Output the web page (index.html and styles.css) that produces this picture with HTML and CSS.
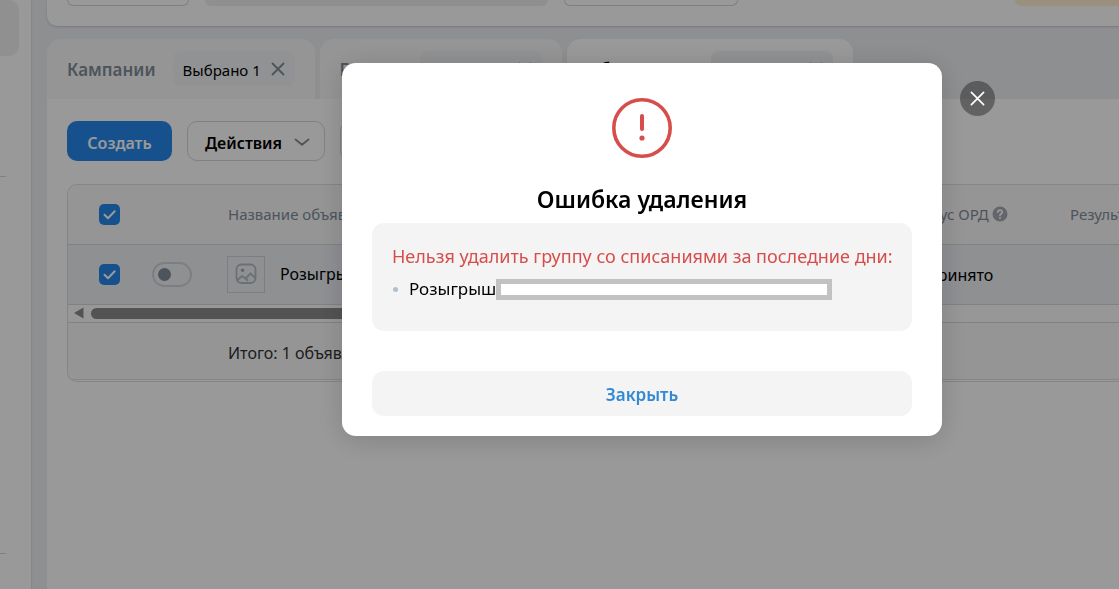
FILE: index.html
```html
<!DOCTYPE html>
<html lang="ru">
<head>
<meta charset="utf-8">
<title>Ошибка удаления</title>
<link rel="stylesheet" href="styles.css">
</head>
<body>
<div class="app">
  <aside class="sidebar">
    <div class="sidebar-item"></div>
    <hr class="sidebar-line">
    <hr class="sidebar-line sidebar-line-low">
  </aside>
  <main class="main">
    <section class="toolbar">
      <div class="tool tool-small"></div>
      <div class="tool tool-search"></div>
      <div class="tool tool-filter"></div>
      <div class="tool tool-notice"></div>
    </section>
    <nav class="tabs">
      <div class="tab">
        <a class="tab-link" href="#campaigns">Кампании</a>
        <button class="chip" type="button">Выбрано 1
          <svg class="chip-x" viewBox="0 0 14 14"><path d="M1.5 1.5l11 11M12.500 1.500l-11 11"/></svg>
        </button>
      </div>
      <div class="tab">
        <a class="tab-link" href="#groups">Группы</a>
        <button class="chip" type="button">Выбрано 1
          <svg class="chip-x" viewBox="0 0 14 14"><path d="M1.5 1.5l11 11M12.500 1.500l-11 11"/></svg>
        </button>
      </div>
      <div class="tab tab-active">
        <a class="tab-link" href="#ads">Объявления</a>
        <button class="chip" type="button">Выбрано 1
          <svg class="chip-x" viewBox="0 0 14 14"><path d="M1.5 1.5l11 11M12.500 1.500l-11 11"/></svg>
        </button>
      </div>
    </nav>
    <section class="panel">
      <div class="actions">
        <button class="btn btn-primary" type="button">Создать</button>
        <button class="btn btn-outline" type="button">Действия
          <svg class="chevron" viewBox="0 0 16 9"><path d="M1.500 1.500L8 6.800l6.500-5.300"/></svg>
        </button>
        <button class="btn btn-outline btn-more" type="button" aria-label="Ещё"></button>
      </div>
      <div class="grid">
        <table class="table">
          <colgroup><col class="col-check"><col class="col-toggle"><col class="col-name"><col class="col-status"><col class="col-result"></colgroup>
          <thead>
            <tr>
              <th class="cell-check"><input class="check" type="checkbox" aria-label="Выбрать все" checked></th>
              <th></th>
              <th>Название объявления</th>
              <th><span class="status-head">Статус ОРД
                <svg class="help" viewBox="0 0 16 16"><circle cx="8" cy="8" r="7.500"/><path d="M5.800 6.200C5.900 3.500 10.300 3.400 10.300 6.100C10.300 7.700 8 7.800 8 9.500"/><circle class="help-dot" cx="8" cy="12" r="1"/></svg></span></th>
              <th>Результат</th>
            </tr>
          </thead>
          <tbody>
            <tr>
              <td class="cell-check"><input class="check" type="checkbox" aria-label="Выбрать объявление" checked></td>
              <td class="cell-toggle"><input class="toggle" type="checkbox" role="switch" aria-label="Включить объявление"></td>
              <td><div class="ad">
                <span class="thumb"><svg class="picture" viewBox="0 0 22 22"><rect x="1.500" y="1.500" width="19" height="18.500" rx="5"/><circle class="picture-dot" cx="7.500" cy="7.200" r="1.700"/><path d="M2.500 17l4.500-4 3.500 2.500 5-5 4.500 4.300M11 16l1.500 1.200"/></svg></span>
                Розыгрыш</div></td>
              <td class="cell-status">Принято</td>
              <td></td>
            </tr>
          </tbody>
        </table>
        <div class="scroll">
          <svg class="scroll-arrow" viewBox="0 0 10 12"><path d="M9.500.5v11L.8 6.600a.8.8 0 0 1 0-1.200z"/></svg>
          <div class="scroll-thumb"></div>
        </div>
        <div class="total">Итого: 1 объявление</div>
      </div>
    </section>
  </main>
</div>
<div class="overlay">
  <div class="dialog" role="dialog" aria-modal="true" aria-labelledby="dialog-title">
    <button class="dialog-x" type="button" aria-label="Закрыть окно">
      <svg class="dialog-x-icon" viewBox="0 0 16 16"><path d="M1.500 1.500l13 13M14.500 1.500l-13 13"/></svg>
    </button>
    <svg class="alert" viewBox="0 0 60 60"><circle class="alert-ring" cx="30" cy="30" r="28.200"/><path d="M30 18v13"/><circle class="alert-dot" cx="30" cy="40" r="2.600"/></svg>
    <h1 class="dialog-title" id="dialog-title">Ошибка удаления</h1>
    <div class="message">
      <p class="message-text">Нельзя удалить группу со списаниями за последние дни:</p>
      <ul class="message-list">
        <li class="message-item">Розыгрыш <span class="redacted"></span></li>
      </ul>
    </div>
    <button class="dialog-button" type="button">Закрыть</button>
  </div>
</div>
</body>
</html>
```
FILE: styles.css
```css
* { box-sizing: border-box; }
body {
  margin: 0;
  height: 100vh;
  overflow: hidden;
  background: #ebeef2;
  color: #000;
  font-family: "Noto Sans", "Open Sans", sans-serif;
  font-size: 16px;
}
button { font: inherit; border: 0; margin: 0; cursor: pointer; }
svg { fill: none; stroke-linecap: round; stroke-linejoin: round; flex: none; }

.app { display: flex; gap: 16px; height: 100%; }
.sidebar { width: 31px; flex: none; background: #fff; box-shadow: 0 0 2px rgba(0, 0, 0, .15); }
.sidebar-item { height: 56px; width: 19px; background: #f0f0f1; border-radius: 0 10px 10px 0; }
.sidebar-line { width: 6px; height: 1px; margin: 120px 0 0; border: 0; background: #d3d6d9; }
.sidebar-line-low { margin-top: 376px; }
.main { flex: 1; min-width: 0; display: flex; flex-direction: column; }

.toolbar {
  display: flex;
  align-items: flex-start;
  height: 26px;
  flex: none;
  overflow: hidden;
  padding: 0 0 0 20px;
  background: #fff;
  border-bottom-left-radius: 10px;
  box-shadow: 0 1px 2px rgba(0, 0, 0, .15);
}
.tool { height: 6px; border-radius: 0 0 10px 10px; }
.tool-small, .tool-filter { border: 1px solid #d3d6d9; border-top: 0; }
.tool-small { width: 122px; }
.tool-search { width: 343px; margin-left: 16px; background: #ebeef2; }
.tool-filter { width: 174px; margin-left: 16px; }
.tool-notice { flex: none; width: 104px; margin-left: auto; border-radius: 0 0 0 10px; background: #fff0d2; }

.tabs { display: flex; gap: 5px; margin-top: 13px; flex: none; }
.tab {
  display: flex;
  align-items: flex-start;
  justify-content: space-between;
  gap: 17px;
  height: 60px;
  padding: 12px 20px;
  background: #f9f9fa;
  border-radius: 14px 14px 0 0;
}
.tab-active { background: #fff; }
.tab-link { color: #818c99; font-size: 17px; font-weight: 600; line-height: 38px; text-decoration: none; }
.tab-active .tab-link { color: #000; }
.chip {
  display: flex;
  align-items: center;
  justify-content: space-between;
  width: 122px;
  height: 35px;
  padding: 2px 10px 0;
  background: #f2f3f5;
  border-radius: 8px;
  font-size: 15px;
  white-space: nowrap;
}
.chip-x { width: 14px; height: 14px; stroke: #818c99; stroke-width: 1.800; margin-top: -2px; }

.panel { flex: 1; background: #fff; padding: 22px 0 0 20px; }
.actions { display: flex; gap: 15px; }
.btn { display: flex; align-items: center; justify-content: center; gap: 12px; height: 40px; border-radius: 10px; font-weight: 600; padding: 3px 0 0; }
.btn-primary { width: 105px; background: #2688eb; color: #fff; }
.btn-outline { width: 138px; padding-left: 3px; background: #fff; border: 1px solid #d3d6d9; color: #000; }
.btn-more { width: 60px; }
.chevron { width: 16px; height: 9px; stroke: #818c99; stroke-width: 1.800; }

.grid {
  margin-top: 23px;
  overflow: hidden;
  border: 1px solid #dcdee0;
  border-right: 0;
  border-radius: 10px 0 0 10px;
  background: #fff;
}
.table { table-layout: fixed; width: 1252px; border-collapse: collapse; }
.col-check, .col-toggle { width: 72px; }
.col-name { width: 680px; }
.col-status { width: 162px; }
.col-result { width: 266px; }
.table th { height: 59px; padding: 0 16px; background: #f9f9f9; color: #818c99; font-size: 15px; font-weight: 400; text-align: left; }
.table td { height: 60px; padding: 0 16px; background: #edf0f4; border: 0 solid #d7d8d9; border-width: 1px 0; }
.table .cell-check { padding: 0 0 0 31px; }
.table .cell-toggle { padding: 0 0 0 12px; }
.table .cell-status { padding: 2px 0 0 34px; }
.check {
  appearance: none;
  display: block;
  width: 21px;
  height: 21px;
  margin: 0;
  border-radius: 5px;
  background: #2688eb url("data:image/svg+xml,%3Csvg xmlns='http://www.w3.org/2000/svg' viewBox='0 0 21 21'%3E%3Cpath d='M5.500 10.800l3.500 3.500 6.700-7' fill='none' stroke='white' stroke-width='2' stroke-linecap='round' stroke-linejoin='round'/%3E%3C/svg%3E");
}
.toggle {
  appearance: none;
  display: flex;
  align-items: center;
  width: 40px;
  height: 25px;
  margin: 0;
  padding-left: 4px;
  border: 2px solid #d0d3d7;
  border-radius: 13px;
}
.toggle::before { content: ""; width: 13px; height: 13px; border-radius: 50%; background: #818c99; }
.ad { display: flex; align-items: center; gap: 15px; margin-left: -1px; }
.thumb { display: flex; align-items: center; justify-content: center; width: 38px; height: 37px; border: 1px solid #d0d3d7; }
.picture { width: 22px; height: 22px; stroke: #b4bac2; stroke-width: 1.800; }
.picture-dot, .help { fill: #a4abb5; stroke: none; }
.status-head { display: flex; align-items: center; gap: 3px; white-space: nowrap; }
.help { width: 16px; height: 16px; }
.help path { fill: none; stroke: #fff; stroke-width: 1.700; }
.help .help-dot { fill: #fff; }
.scroll { display: flex; align-items: center; gap: 7px; height: 18px; padding-left: 6px; border-bottom: 1px solid #d7d8d9; background: #fcfcfc; }
.scroll-arrow { width: 10px; height: 12px; fill: #8b8b8b; }
.scroll-thumb { flex: none; width: 720px; height: 11px; border-radius: 6px; background: #8b8b8b; }
.total { height: 57px; padding-left: 160px; border-bottom: 1px solid #dcdee0; background: #f9f9f9; color: #333; line-height: 60px; margin-bottom: 1px; }

.overlay {
  position: fixed;
  inset: 0;
  display: flex;
  align-items: flex-start;
  justify-content: center;
  padding: 63px 0 0 165px;
  background: rgba(0, 0, 0, .4);
}
.dialog {
  position: relative;
  display: flex;
  flex-direction: column;
  align-items: center;
  width: 600px;
  padding: 35px 30px 20px;
  background: #fff;
  border-radius: 14px;
  box-shadow: 0 4px 28px rgba(0, 0, 0, .16);
}
.dialog-x {
  position: absolute;
  top: 18px;
  right: -53px;
  display: flex;
  align-items: center;
  justify-content: center;
  width: 35px;
  height: 35px;
  padding: 0;
  border-radius: 50%;
  background: rgba(0, 0, 0, .36);
}
.dialog-x-icon { width: 15px; height: 15px; stroke: #fff; stroke-width: 1.800; }
.alert { width: 60px; height: 60px; stroke: #d64d4b; stroke-width: 4; }
.alert-ring { stroke-width: 3.600; }
.alert-dot { fill: #d64d4b; stroke: none; }
.dialog-title { margin: 25px 0 8px; font-size: 23px; font-weight: 600; line-height: 32px; }
.message { width: 100%; padding: 19px 18px 28px 20px; border-radius: 12px; background: #f4f4f4; }
.message-text { margin: 0; color: #d64d4b; font-size: 18px; line-height: 28px; white-space: nowrap; }
.message-list { margin: 5px 0 0; padding: 0; list-style: none; }
.message-item { display: flex; align-items: center; font-size: 17px; line-height: 28px; }
.message-item::before { content: ""; width: 5px; height: 5px; margin: 0 11px 0 1px; border-radius: 50%; background: #b3bfcb; }
.redacted { width: 336px; height: 21px; border: 5px solid #c2c2c2; background: #fff; }
.dialog-button { width: 100%; height: 45px; margin-top: 40px; padding: 2px 0 0; border-radius: 12px; background: #f4f4f4; color: #3489d3; font-size: 17px; font-weight: 600; }
```
